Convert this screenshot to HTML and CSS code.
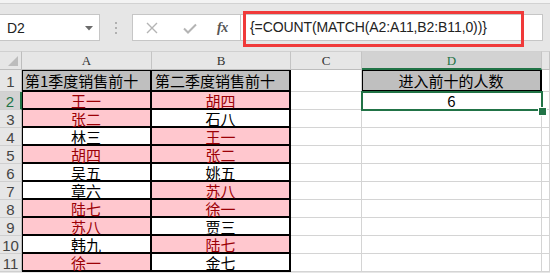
FILE: index.html
```html
<!DOCTYPE html>
<html>
<head>
<meta charset="utf-8">
<link rel="stylesheet" href="styles.css">
</head>
<body>
<div class="app">
  <div class="topstrip"></div>
  <div class="fbar">
    <div class="namebox">
      <span class="nametext">D2</span>
      <svg class="dd" width="8" height="5" viewBox="0 0 8 5"><path d="M0 0H8L4 4.5Z" fill="#6b6b6b"/></svg>
    </div>
    <div class="sep">
      <svg width="2" height="12" viewBox="0 0 2 12"><rect x="0" y="0" width="2" height="2" fill="#b0b0b0"/><rect x="0" y="5" width="2" height="2" fill="#b0b0b0"/><rect x="0" y="10" width="2" height="2" fill="#b0b0b0"/></svg>
    </div>
    <div class="btns">
      <svg class="ic-x" width="12" height="12" viewBox="0 0 12 12"><path d="M1 1L11 11M11 1L1 11" stroke="#b4b4b4" stroke-width="1.4" fill="none"/></svg>
      <svg class="ic-ok" width="14" height="11" viewBox="0 0 14 11"><path d="M1 5.5L5 9.5L13 1.5" stroke="#b4b4b4" stroke-width="2" fill="none"/></svg>
      <span class="fx">fx</span>
    </div>
    <div class="formula">{=COUNT(MATCH(A2:A11,B2:B11,0))}</div>
    <div class="redbox"></div>
  </div>
  <div class="sheet">
    <div class="corner"><svg width="10" height="10" viewBox="0 0 10 10"><path d="M10 0V10H0Z" fill="#bcbcbc"/></svg></div>
    <div class="ch">A</div>
    <div class="ch">B</div>
    <div class="ch">C</div>
    <div class="ch sel">D</div>
    <div class="ch"></div>

    <div class="rh">1</div>
    <div class="c t bx la tp l">第1季度销售前十</div>
    <div class="c t bx tp l">第二季度销售前十</div>
    <div class="c"></div>
    <div class="c t bx la tp">进入前十的人数</div>
    <div class="c"></div>

    <div class="rh sel">2</div>
    <div class="c p bx la">王一</div>
    <div class="c p bx">胡四</div>
    <div class="c"></div>
    <div class="c active">6</div>
    <div class="c"></div>

    <div class="rh">3</div>
    <div class="c p bx la">张二</div>
    <div class="c bx">石八</div>
    <div class="c"></div>
    <div class="c"></div>
    <div class="c"></div>

    <div class="rh">4</div>
    <div class="c bx la">林三</div>
    <div class="c p bx">王一</div>
    <div class="c"></div>
    <div class="c"></div>
    <div class="c"></div>

    <div class="rh">5</div>
    <div class="c p bx la">胡四</div>
    <div class="c p bx">张二</div>
    <div class="c"></div>
    <div class="c"></div>
    <div class="c"></div>

    <div class="rh">6</div>
    <div class="c bx la">吴五</div>
    <div class="c bx">姚五</div>
    <div class="c"></div>
    <div class="c"></div>
    <div class="c"></div>

    <div class="rh">7</div>
    <div class="c bx la">章六</div>
    <div class="c p bx">苏八</div>
    <div class="c"></div>
    <div class="c"></div>
    <div class="c"></div>

    <div class="rh">8</div>
    <div class="c p bx la">陆七</div>
    <div class="c p bx">徐一</div>
    <div class="c"></div>
    <div class="c"></div>
    <div class="c"></div>

    <div class="rh">9</div>
    <div class="c p bx la">苏八</div>
    <div class="c bx">贾三</div>
    <div class="c"></div>
    <div class="c"></div>
    <div class="c"></div>

    <div class="rh">10</div>
    <div class="c bx la">韩九</div>
    <div class="c p bx">陆七</div>
    <div class="c"></div>
    <div class="c"></div>
    <div class="c"></div>

    <div class="rh">11</div>
    <div class="c p bx la">徐一</div>
    <div class="c bx">金七</div>
    <div class="c"></div>
    <div class="c"></div>
    <div class="c"></div>
  </div>
</div>
</body>
</html>
```

FILE: styles.css
```css
* { box-sizing: border-box; }
html, body { margin: 0; padding: 0; }
body {
  width: 550px;
  height: 273px;
  overflow: hidden;
  background: #e6e6e6;
  font-family: "Liberation Sans", Arial, sans-serif;
}
.app { width: 550px; height: 273px; overflow: hidden; }
.topstrip {
  height: 4px;
  background: #f3f3f3;
  border-bottom: 1px solid #d2d2d2;
}
.fbar {
  position: relative;
  height: 47px;
  padding-top: 10px;
  display: flex;
  align-items: flex-start;
}
.namebox {
  width: 100px;
  height: 27px;
  background: #fff;
  border: 1px solid #c6c6c6;
  border-left: none;
  display: flex;
  align-items: center;
  justify-content: space-between;
  padding: 0 6px 0 7px;
}
.nametext { font-size: 14px; color: #222; }
.dd { margin-top: 1px; }
.sep {
  width: 32px;
  height: 27px;
  display: flex;
  align-items: center;
  justify-content: center;
}
.btns {
  width: 109px;
  height: 27px;
  background: #fff;
  border: 1px solid #c6c6c6;
  display: flex;
  align-items: center;
  padding-left: 13px;
}
.ic-x { margin-right: 25px; }
.ic-ok { margin-right: 20px; margin-top: 1px; }
.fx {
  font-family: "Liberation Serif", "Times New Roman", serif;
  font-style: italic;
  font-weight: bold;
  font-size: 14px;
  color: #555;
  letter-spacing: -0.5px;
}
.formula {
  width: 302px;
  height: 27px;
  background: #fff;
  border: 1px solid #c6c6c6;
  border-left: none;
  font-size: 14px;
  color: #222;
  line-height: 25px;
  padding-left: 9px;
  letter-spacing: -0.1px;
}
.redbox {
  position: absolute;
  left: 243px;
  top: 7px;
  width: 281px;
  height: 36px;
  border: 3px solid #f03a3a;
}
.sheet {
  display: grid;
  grid-template-columns: 22px 130px 139px 71px 180px 8px;
  grid-template-rows: 19px 22px repeat(10, 18px);
  background: #fff;
}
.corner {
  background: #e6e6e6;
  border-right: 1px solid #bdbdbd;
  border-bottom: 1px solid #bdbdbd;
  border-top: 1px solid #d0d0d0;
  display: flex;
  align-items: flex-end;
  justify-content: flex-end;
  padding: 0 3px 3px 0;
}
.ch {
  background: #e6e6e6;
  border-right: 1px solid #c4c4c4;
  border-bottom: 1px solid #bdbdbd;
  border-top: 1px solid #d0d0d0;
  font-family: "Liberation Serif", "Times New Roman", serif;
  font-size: 13px;
  color: #333;
  text-align: center;
  line-height: 17px;
}
.ch.sel {
  background: #d2d2d2;
  color: #217346;
  border-bottom: 2px solid #217346;
}
.rh {
  background: #e6e6e6;
  border-right: 1px solid #bdbdbd;
  border-bottom: 1px solid #cfcfcf;
  font-size: 15px;
  line-height: 15px;
  color: #444;
  text-align: center;
  display: flex;
  align-items: center;
  justify-content: center;
  padding-top: 1px;
}
.rh.sel {
  background: #d2d2d2;
  color: #217346;
  border-right: 2px solid #217346;
}
.c {
  border-right: 1px solid #d4d4d4;
  border-bottom: 1px solid #d4d4d4;
  font-family: "Noto Sans CJK SC", "Liberation Sans", sans-serif;
  font-size: 15px;
  line-height: 15px;
  color: #000;
  display: flex;
  align-items: center;
  justify-content: center;
  white-space: nowrap;
}
.c.l { justify-content: flex-start; padding-left: 3px; }
.c.t { background: #bfbfbf; }
.c.p { background: #ffc7ce; color: #9c0006; }
.c.bx {
  border-right: 2px solid #000;
  border-bottom: 2px solid #000;
}
.c.la { box-shadow: inset 1px 0 0 #000; }
.c.tp { box-shadow: inset 0 1px 0 #000; }
.c.la.tp { box-shadow: inset 1px 1px 0 #000; }
.c.active { position: relative; }
.c.active::after {
  content: "";
  position: absolute;
  left: -1px;
  top: -1px;
  right: -2px;
  bottom: -2px;
  border: 2px solid #217346;
  z-index: 2;
}
.c.active::before {
  content: "";
  position: absolute;
  left: 176px;
  top: 15px;
  width: 7px;
  height: 7px;
  background: #217346;
  border: 1px solid #fff;
  z-index: 3;
}
```
